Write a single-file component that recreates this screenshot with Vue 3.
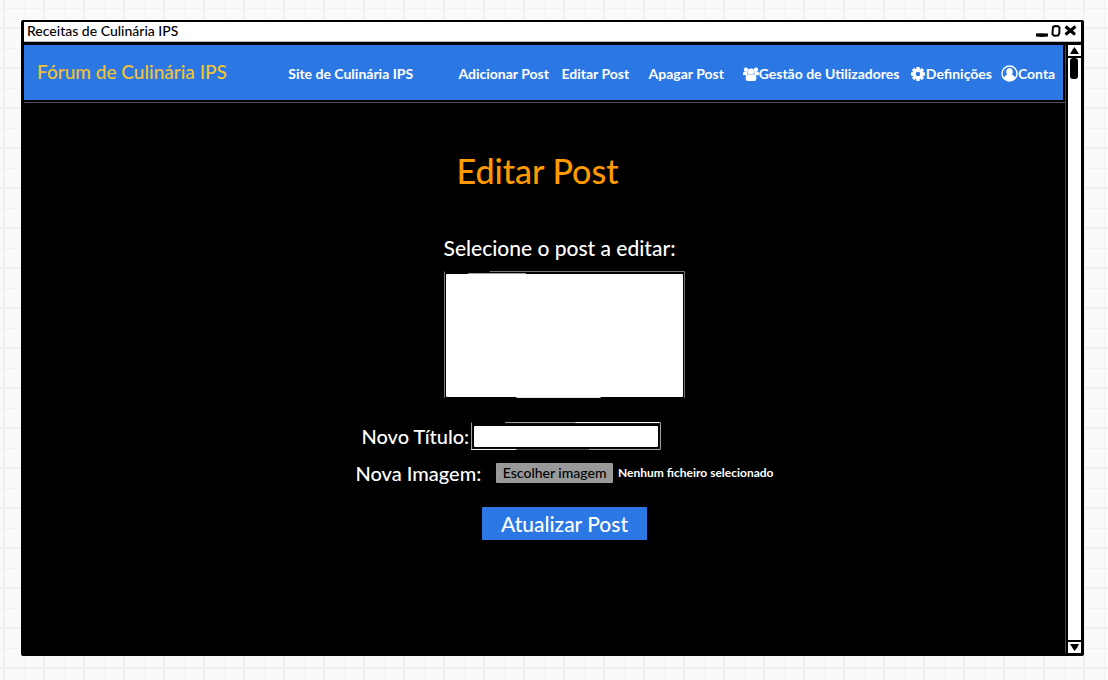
<script setup>
import { ref } from 'vue'

const title = ref('')
const post = ref('')
const links = [
  { text: 'Site de Culinária IPS' },
  { text: 'Adicionar Post' },
  { text: 'Editar Post' },
  { text: 'Apagar Post' },
  { text: 'Gestão de Utilizadores', icon: 'users' },
  { text: 'Definições', icon: 'gear' },
  { text: 'Conta', icon: 'account' },
]
const teeth = [0, 45, 90, 135, 180, 225, 270, 315]
</script>

<template>
  <div class="paper">
    <div class="window">
      <header class="titlebar">
        <span class="caption">Receitas de Culinária IPS</span>
        <div class="controls">
          <button type="button" aria-label="Minimizar">
            <svg width="12" height="14" viewBox="0 0 12 14"><path d="M0 9.600 4 9.200 12 9.600v3L6 13 0 12.600z" /></svg>
          </button>
          <button type="button" aria-label="Maximizar">
            <svg width="10" height="14" viewBox="0 0 10 14"><path d="M2 3 4 2l3 .2 1.500 1.300-.2 6L7 11.500l-4 .2L1.400 10z" fill="none" stroke="#000" stroke-width="2" /></svg>
          </button>
          <button type="button" aria-label="Fechar">
            <svg width="13" height="14" viewBox="0 0 13 14"><path d="M1.500 2.500l9.500 8M11.500 2.500l-10 8" fill="none" stroke="#000" stroke-width="3" /></svg>
          </button>
        </div>
      </header>

      <div class="viewport">
        <div class="page">
          <nav class="navbar">
            <a class="brand" href="#">Fórum de Culinária IPS</a>
            <a v-for="link in links" :key="link.text" class="link" href="#">
              <svg v-if="link.icon === 'users'" width="16" height="16" viewBox="0 0 16 16" fill="#fff">
                <circle cx="3" cy="3.600" r="2.200" /><circle cx="13" cy="3.600" r="2.200" />
                <path d="M0 9V7.200Q0 5.500 2 5.500h3L4 9.400zM16 9V7.200Q16 5.500 14 5.500h-3l1 3.900z" />
                <circle cx="8" cy="5.600" r="3.200" />
                <path d="M2.700 13V11Q3 8 5.400 8.200q2.600 1.600 5.200 0Q13 8 13.300 11v2q0 2-2 2H4.700q-2 0-2-2z" />
              </svg>
              <svg v-else-if="link.icon === 'gear'" width="16" height="16" viewBox="0 0 16 16">
                <rect v-for="a in teeth" :key="a" x="6.300" y="1" width="3.400" height="4" rx=".6" fill="#fff" :transform="`rotate(${a} 8 8)`" />
                <circle cx="8" cy="8" r="3.800" fill="none" stroke="#fff" stroke-width="3.200" />
              </svg>
              <svg v-else-if="link.icon === 'account'" width="17" height="17" viewBox="0 0 17 17">
                <circle cx="8.500" cy="8.500" r="7.500" fill="none" stroke="#fff" stroke-width="1.400" />
                <ellipse cx="8.500" cy="6.800" rx="3.200" ry="3.800" fill="#fff" />
                <path d="M3 13q.4-3 3.200-3.600 2.300 1.400 4.600 0Q13.600 10 14 13q-2.300 2.700-5.500 2.700T3 13z" fill="#fff" />
              </svg>
              <span>{{ link.text }}</span>
            </a>
          </nav>

          <main class="content">
            <h1>Editar Post</h1>
            <form @submit.prevent>
              <label class="select-label" for="post">Selecione o post a editar:</label>
              <div class="sketch list">
                <select id="post" v-model="post" size="6"></select>
                <svg class="strokes" viewBox="0 0 100 100" preserveAspectRatio="none" aria-hidden="true">
                  <path d="M.2.400V99M19 .4H99.800V99" stroke="#777" />
                  <path d="M10 2H34" stroke="#aaa" /><path d="M30 98.800H65" stroke="#eee" />
                </svg>
              </div>

              <div class="title-row">
                <label for="title">Novo Título:</label>
                <div class="sketch field">
                  <input id="title" v-model="title" type="text" />
                  <svg class="strokes" viewBox="0 0 100 100" preserveAspectRatio="none" aria-hidden="true">
                    <path d="M.3 2V96M18 2H99.700V98H62" stroke="#aaa" />
                    <path d="M0 98H24M55 2H99" stroke="#fff" /><path d="M24 98H62" stroke="#555" />
                  </svg>
                </div>
              </div>

              <div class="image-row">
                <span class="image-label">Nova Imagem:</span>
                <label class="choose">Escolher imagem<input type="file" accept="image/*" aria-label="Nova Imagem" /></label>
                <span class="file-name">Nenhum ficheiro selecionado</span>
              </div>

              <button class="submit" type="submit">Atualizar Post</button>
            </form>
          </main>
        </div>

        <div class="scrollbar">
          <button type="button" aria-label="Subir"><svg width="11" height="9" viewBox="0 0 11 9"><path d="M5.500 1 10 8H1L4 3z" /></svg></button>
          <div class="track"><div class="thumb"></div></div>
          <button type="button" aria-label="Descer"><svg width="11" height="9" viewBox="0 0 11 9"><path d="M1 1h9L8 5 5.500 8z" /></svg></button>
        </div>
      </div>
    </div>
  </div>
</template>

<style>
body {
  margin: 0;
}
</style>

<style scoped>
* {
  box-sizing: border-box;
}
button {
  padding: 0;
  border: 0;
  background: none;
  font: inherit;
  color: inherit;
}
svg {
  display: block;
  flex: none;
}
.paper {
  display: flex;
  min-height: 100vh;
  padding: 20px 24px 24px 21px;
  font-family: Lato, "Noto Sans", sans-serif;
  background-color: #fafafa;
  background-image:
    linear-gradient(90deg, #f0f0f0 2px, transparent 2px),
    linear-gradient(#f0f0f0 2px, transparent 2px),
    linear-gradient(90deg, #f3f3f3 1px, transparent 1px),
    linear-gradient(#f3f3f3 1px, transparent 1px);
  background-size: 40px 40px;
  background-position: 3px 0, 0 27px, 24px 0, 0 8px;
}
.window {
  flex: 1;
  display: flex;
  flex-direction: column;
  border: 3px solid #000;
  border-top-width: 2px;
  border-radius: 2px;
  background: #000;
}
.titlebar {
  display: flex;
  align-items: center;
  justify-content: space-between;
  height: 20px;
  padding: 0 4px 2px 3px;
  border-bottom: 1px solid #bbb;
  background: #fff;
}
.caption {
  font-size: 14px;
  line-height: 16px;
  font-weight: 500;
}
.controls {
  display: flex;
  gap: 3px;
}
.viewport {
  flex: 1;
  display: flex;
  padding-top: 3px;
}
.page {
  flex: 1;
  display: flex;
  flex-direction: column;
  border-right: 1px solid #444;
}
.navbar {
  display: grid;
  grid-template-columns: 251fr 170fr 103fr 87fr 94fr 167fr 91fr 62fr;
  align-items: center;
  height: 55px;
  margin-right: 2px;
  padding-left: 13px;
  background: #2b78e4;
}
.navbar a {
  color: #fff;
  text-decoration: none;
  white-space: nowrap;
}
.navbar .brand {
  padding-bottom: 2px;
  color: #f1c232;
  font-size: 19px;
  line-height: 24px;
  font-weight: 500;
}
.link {
  display: flex;
  align-items: center;
  min-width: 0;
  padding-top: 2px;
  font-size: 14px;
  line-height: 20px;
  font-weight: 700;
}
.content {
  flex: 1;
  margin-top: 2px;
  border-top: 1px solid #555;
  color: #fff;
}
h1 {
  margin: 48px 14px 0 0;
  color: #ff9900;
  font-size: 34px;
  line-height: 40px;
  font-weight: 500;
  text-align: center;
}
form {
  display: flex;
  flex-direction: column;
  width: 418px;
  margin: 45px 0 0 calc(50% - 189px);
  font-size: 20px;
  line-height: 24px;
  font-weight: 500;
  white-space: nowrap;
}
.select-label {
  margin-right: 10px;
  font-size: 21px;
  text-align: center;
}
.sketch {
  position: relative;
  display: flex;
}
.strokes {
  position: absolute;
  inset: 0;
  width: 100%;
  height: 100%;
  pointer-events: none;
}
.strokes path {
  fill: none;
  stroke-width: 1px;
  vector-effect: non-scaling-stroke;
}
.list {
  align-self: center;
  width: 241px;
  height: 128px;
  margin-top: 11px;
  padding: 3px 2px 2px;
}
select,
.field input {
  width: 100%;
  height: 100%;
  margin: 0;
  border: 0;
  border-radius: 1px;
  background: #fff;
  font: inherit;
}
.title-row {
  display: flex;
  align-items: center;
  margin-top: 23px;
  padding-left: 6px;
}
.title-row label {
  width: 109px;
}
.field {
  width: 190px;
  height: 28px;
  padding: 4px 3px 3px;
}
.image-row {
  display: flex;
  align-items: center;
  height: 24px;
  margin-top: 11px;
}
.image-label {
  width: 141px;
}
.choose {
  width: 117px;
  height: 20px;
  margin-right: 5px;
  border-radius: 1px;
  background: #999;
  color: #000;
  font-size: 14px;
  line-height: 20px;
  text-align: center;
}
.choose input {
  position: absolute;
  width: 1px;
  height: 1px;
  opacity: 0;
}
.file-name {
  font-size: 12px;
  font-weight: 700;
}
.submit {
  align-self: center;
  width: 165px;
  height: 33px;
  margin-top: 22px;
  border-radius: 1px;
  background: #2b78e4;
  font-size: 21px;
  line-height: 33px;
}
.scrollbar {
  display: flex;
  flex-direction: column;
  width: 15px;
  border-left: 2px solid #000;
  background: #fff;
}
.scrollbar button {
  display: flex;
  align-items: center;
  justify-content: center;
  height: 11px;
}
.track {
  flex: 1;
  padding: 0 2px;
  border-top: 2px solid #000;
  border-bottom: 2px solid #000;
}
.thumb {
  width: 8px;
  height: 21px;
  border-radius: 3px;
  background: #000;
}
</style>
